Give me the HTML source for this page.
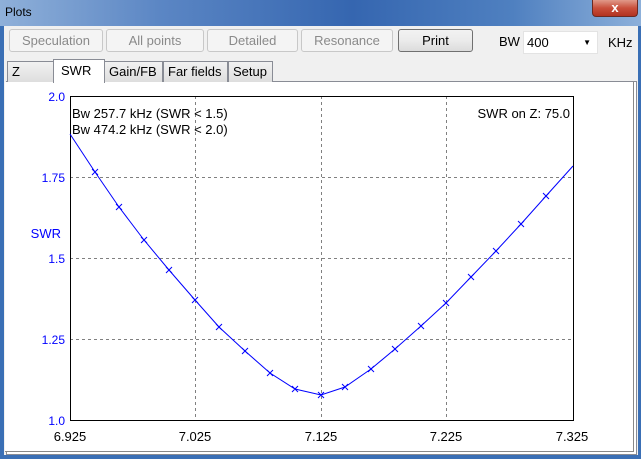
<!DOCTYPE html>
<html><head><style>
*{margin:0;padding:0;box-sizing:border-box}
body{width:641px;height:459px;overflow:hidden;position:relative;background:#3a6fb5;font-family:"Liberation Sans",sans-serif;font-size:12px}
.title{position:absolute;left:0;top:0;width:641px;height:26px;background:linear-gradient(90deg,#8fb0d9 0%,#5b86c4 25%,#3566b0 55%,#4f80c0 80%,#8db0da 100%)}
.title span{position:absolute;left:5px;top:5px;font-size:12px;color:#000}
.close{position:absolute;left:592px;top:0;width:46px;height:17px;border:1px solid #6b2a22;border-top:none;border-radius:0 0 4px 4px;background:linear-gradient(#e09a8a,#c9503c 50%,#b23220);color:#fff;font-weight:bold;font-size:13px;text-align:center;line-height:15px}
.frame{position:absolute;left:4px;top:26px;width:634px;height:429px;background:#f0f0f0}
.btn{position:absolute;top:29px;height:23px;border:1px solid #c8c8c8;border-radius:3px;background:#f4f4f4;color:#8a8a8a;text-align:center;line-height:21px;font-size:13px}
.print{border-color:#707070;background:linear-gradient(#f2f2f2,#ebebeb 50%,#dcdcdc);color:#000}
.tab{position:absolute;top:61px;height:21px;border:1px solid #898c95;border-bottom:none;background:linear-gradient(#f2f2f2,#dedede);font-size:13px;line-height:20px;padding-left:4px}
.panel{position:absolute;left:6px;top:81px;width:631px;height:374px;background:#fff;border:1px solid #898c95}
.inner{position:absolute;left:5px;top:82px;width:629px;height:370px;border-right:1px solid #888;border-bottom:1px solid #888;background:#fff}
</style></head><body>
<div class="title"><span>Plots</span></div>
<div class="close">x</div>
<div class="frame"></div>
<div class="btn" style="left:9px;width:94px">Speculation</div>
<div class="btn" style="left:106px;width:98px">All points</div>
<div class="btn" style="left:207px;width:91px">Detailed</div>
<div class="btn" style="left:301px;width:92px">Resonance</div>
<div class="btn print" style="left:398px;width:75px">Print</div>
<div style="position:absolute;left:499px;top:34px;font-size:13px">BW</div>
<div style="position:absolute;left:523px;top:31px;width:75px;height:23px;background:#fff;border:1px solid #e3e3e3;font-size:13px;line-height:21px;padding-left:3px">400<span style="position:absolute;right:6px;top:0;font-size:8px">▼</span></div>
<div style="position:absolute;left:608px;top:35px;font-size:13px">KHz</div>
<div class="panel"></div>
<div class="inner"></div>
<div class="tab" style="left:7px;width:47px">Z</div>
<div class="tab" style="left:104px;width:59px">Gain/FB</div>
<div class="tab" style="left:163px;width:65px">Far fields</div>
<div class="tab" style="left:228px;width:45px">Setup</div>
<div class="tab" style="left:53px;top:59px;height:24px;width:52px;background:#fff;padding-left:7px;line-height:22px">SWR</div>
<svg style="position:absolute;left:0;top:0" width="641" height="459" font-family="Liberation Sans, sans-serif" font-size="12">
<g stroke="#808080" stroke-dasharray="3,3" stroke-width="1">
<line x1="195.5" y1="96" x2="195.5" y2="420"/><line x1="321.5" y1="96" x2="321.5" y2="420"/><line x1="446.5" y1="96" x2="446.5" y2="420"/>
<line x1="70" y1="177.5" x2="573" y2="177.5"/><line x1="70" y1="258.5" x2="573" y2="258.5"/><line x1="70" y1="339.5" x2="573" y2="339.5"/>
</g>
<rect x="70.5" y="96.5" width="503" height="324" fill="none" stroke="#000"/>
<polyline fill="none" stroke="#0000ff" points="70,134 95,172 119,207 144,240 169,270 195,300 219,327 245,351 270,373 295,389 321,395 345,387 371,369 395,349 421,326 446,303 471,277 496,251 521,224 546,196 573,166"/>
<g stroke="#0000ff">
<path d="M92 169l6 6M98 169l-6 6M116 204l6 6M122 204l-6 6M141 237l6 6M147 237l-6 6M166 267l6 6M172 267l-6 6M192 297l6 6M198 297l-6 6M216 324l6 6M222 324l-6 6M242 348l6 6M248 348l-6 6M267 370l6 6M273 370l-6 6M292 386l6 6M298 386l-6 6M318 392l6 6M324 392l-6 6M342 384l6 6M348 384l-6 6M368 366l6 6M374 366l-6 6M392 346l6 6M398 346l-6 6M418 323l6 6M424 323l-6 6M443 300l6 6M449 300l-6 6M468 274l6 6M474 274l-6 6M493 248l6 6M499 248l-6 6M518 221l6 6M524 221l-6 6M543 193l6 6M549 193l-6 6"/>
</g>
<g fill="#0000ff" text-anchor="end">
<text x="65" y="101">2.0</text><text x="65" y="182">1.75</text><text x="65" y="263">1.5</text><text x="65" y="344">1.25</text><text x="65" y="425">1.0</text>
<text x="61" y="238" font-size="13">SWR</text>
</g>
<g text-anchor="middle" font-size="13">
<text x="70" y="441">6.925</text><text x="195" y="441">7.025</text><text x="321" y="441">7.125</text><text x="446" y="441">7.225</text><text x="572" y="441">7.325</text>
</g>
<g font-size="13">
<text x="72" y="118">Bw 257.7 kHz (SWR &lt; 1.5)</text>
<text x="72" y="134">Bw 474.2 kHz (SWR &lt; 2.0)</text>
<text x="570" y="118" text-anchor="end">SWR on Z: 75.0</text>
</g>
</svg>
</body></html>
